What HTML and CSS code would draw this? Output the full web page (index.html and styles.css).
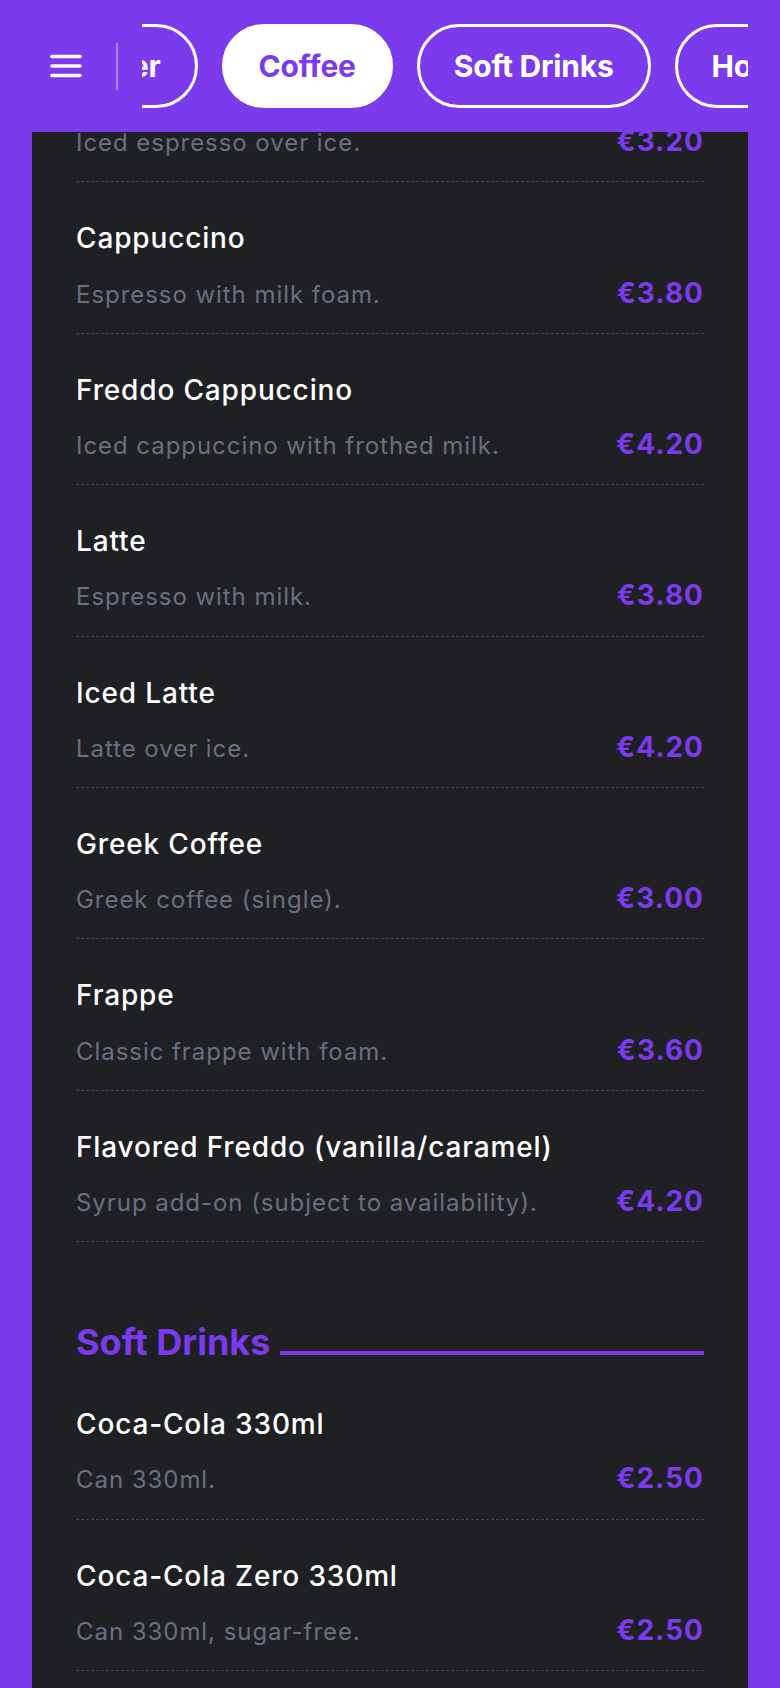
FILE: index.html
```html
<!DOCTYPE html>
<html lang="en">
<head>
<meta charset="utf-8">
<title>Menu</title>
<link rel="stylesheet" href="styles.css">
</head>
<body>
<header class="topbar">
  <button class="menu-btn" aria-label="Menu">
    <svg width="32" height="24" viewBox="0 0 32 24" fill="none" stroke="#fff" stroke-width="3.6" stroke-linecap="round">
      <line x1="2" y1="2.5" x2="30" y2="2.5"/>
      <line x1="2" y1="12" x2="30" y2="12"/>
      <line x1="2" y1="21.5" x2="30" y2="21.5"/>
    </svg>
  </button>
  <span class="bar-divider"></span>
  <nav class="cats">
    <div class="cats-track">
      <a class="pill pill-first">Water</a>
      <a class="pill pill-active">Coffee</a>
      <a class="pill">Soft Drinks</a>
      <a class="pill">Hot Drinks</a>
    </div>
  </nav>
</header>

<main class="card">
  <section class="section">
    <div class="item">
      <div class="item-name">Freddo Espresso</div>
      <div class="item-row"><span class="item-desc">Iced espresso over ice.</span><span class="item-price">€3.20</span></div>
    </div>
    <div class="item">
      <div class="item-name">Cappuccino</div>
      <div class="item-row"><span class="item-desc">Espresso with milk foam.</span><span class="item-price">€3.80</span></div>
    </div>
    <div class="item">
      <div class="item-name">Freddo Cappuccino</div>
      <div class="item-row"><span class="item-desc">Iced cappuccino with frothed milk.</span><span class="item-price">€4.20</span></div>
    </div>
    <div class="item">
      <div class="item-name">Latte</div>
      <div class="item-row"><span class="item-desc">Espresso with milk.</span><span class="item-price">€3.80</span></div>
    </div>
    <div class="item">
      <div class="item-name">Iced Latte</div>
      <div class="item-row"><span class="item-desc">Latte over ice.</span><span class="item-price">€4.20</span></div>
    </div>
    <div class="item">
      <div class="item-name">Greek Coffee</div>
      <div class="item-row"><span class="item-desc">Greek coffee (single).</span><span class="item-price">€3.00</span></div>
    </div>
    <div class="item">
      <div class="item-name">Frappe</div>
      <div class="item-row"><span class="item-desc">Classic frappe with foam.</span><span class="item-price">€3.60</span></div>
    </div>
    <div class="item">
      <div class="item-name">Flavored Freddo (vanilla/caramel)</div>
      <div class="item-row"><span class="item-desc">Syrup add-on (subject to availability).</span><span class="item-price">€4.20</span></div>
    </div>
  </section>

  <section class="section section-next">
    <h2 class="section-title"><span>Soft Drinks</span><span class="title-line"></span></h2>
    <div class="item">
      <div class="item-name">Coca-Cola 330ml</div>
      <div class="item-row"><span class="item-desc">Can 330ml.</span><span class="item-price">€2.50</span></div>
    </div>
    <div class="item">
      <div class="item-name">Coca-Cola Zero 330ml</div>
      <div class="item-row"><span class="item-desc">Can 330ml, sugar-free.</span><span class="item-price">€2.50</span></div>
    </div>
  </section>
</main>
</body>
</html>
```

FILE: styles.css
```css
* { box-sizing: border-box; }

html, body {
  margin: 0;
  padding: 0;
}

body {
  background: #7c3aed;
  font-family: Inter, "Noto Sans", "Liberation Sans", sans-serif;
  color: #fff;
}

.topbar {
  position: fixed;
  top: 0;
  left: 0;
  right: 0;
  height: 132px;
  background: #7c3aed;
  display: flex;
  align-items: center;
  padding: 0 32px 0 50px;
  z-index: 10;
}

.menu-btn {
  background: none;
  border: 0;
  padding: 0;
  width: 32px;
  height: 24px;
  display: flex;
  cursor: pointer;
}

.bar-divider {
  width: 2px;
  height: 47px;
  background: rgba(255, 255, 255, 0.38);
  margin-left: 34px;
  flex: none;
}

.cats {
  flex: 1;
  margin-left: 24px;
  overflow: hidden;
  height: 84px;
}

.cats-track {
  display: flex;
  gap: 24px;
  white-space: nowrap;
}

.pill {
  flex: none;
  height: 84px;
  display: inline-flex;
  align-items: center;
  padding: 0 34px;
  border: 3px solid #fff;
  border-radius: 42px;
  font-size: 30px;
  font-weight: 700;
  color: #fff;
  letter-spacing: -0.2px;
}

.pill-first {
  margin-left: -105px;
}

.pill-active {
  background: #fff;
  color: #7c3aed;
}

.card {
  margin: 0 32px;
  background: #1f2024;
  padding: 31px 44px 40px;
  min-height: 1700px;
}

.item {
  padding: 37px 0 20px;
  border-bottom: 1px dashed #41434c;
}

.item-name {
  font-size: 28px;
  line-height: 39.2px;
  font-weight: 500;
  color: #fff;
  letter-spacing: 0.85px;
}

.item-row {
  margin-top: 15px;
  display: flex;
  justify-content: space-between;
  align-items: baseline;
  gap: 20px;
}

.item-desc {
  font-size: 24px;
  line-height: 36px;
  color: #6b7080;
  letter-spacing: 0.95px;
}

.item-price {
  font-size: 28px;
  line-height: 39.2px;
  font-weight: 700;
  color: #7c3aed;
  flex: none;
  letter-spacing: 1px;
}

.section-next {
  margin-top: 78px;
}

.section-title {
  margin: 0 0 4px;
  display: flex;
  align-items: baseline;
  gap: 10px;
  font-size: 36px;
  line-height: 44px;
  font-weight: 700;
  color: #7c3aed;
}

.title-line {
  flex: 1;
  height: 4px;
  background: #7c3aed;
}
```
